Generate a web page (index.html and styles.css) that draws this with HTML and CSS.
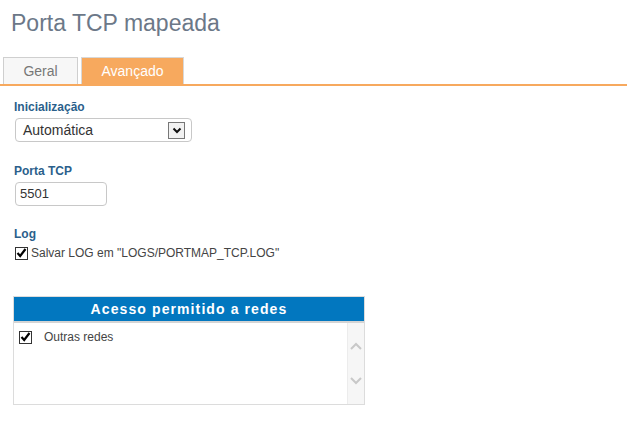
FILE: index.html
```html
<!DOCTYPE html>
<html lang="pt">
<head>
<meta charset="utf-8">
<title>Porta TCP mapeada</title>
<link rel="stylesheet" href="styles.css">
</head>
<body>
<h1 class="title">Porta TCP mapeada</h1>
<div class="tabs">
  <div class="tab">Geral</div>
  <div class="tab active">Avançado</div>
</div>
<div class="content">
  <div class="field field-init">
    <div class="label">Inicialização</div>
    <div class="select">
      <span class="select-text">Automática</span>
      <span class="select-btn">
        <svg width="10" height="7" viewBox="0 0 10 7"><path d="M1.5 1.5 L5 5 L8.5 1.5" fill="none" stroke="#111" stroke-width="2"/></svg>
      </span>
    </div>
  </div>
  <div class="field">
    <div class="label">Porta TCP</div>
    <div class="input">5501</div>
  </div>
  <div class="field">
    <div class="label">Log</div>
    <div class="check-row">
      <span class="check">
        <svg width="11" height="10" viewBox="0 0 11 10"><path d="M1.5 5 L4.2 8 L9.5 1" fill="none" stroke="#000" stroke-width="2.2"/></svg>
      </span>
      <span class="check-label">Salvar LOG em "LOGS/PORTMAP_TCP.LOG"</span>
    </div>
  </div>
  <div class="panel">
    <div class="panel-head">Acesso permitido a redes</div>
    <div class="panel-body">
      <div class="list">
        <div class="list-row">
          <span class="check">
            <svg width="11" height="10" viewBox="0 0 11 10"><path d="M1.5 5 L4.2 8 L9.5 1" fill="none" stroke="#000" stroke-width="2.2"/></svg>
          </span>
          <span class="list-label">Outras redes</span>
        </div>
      </div>
      <div class="scroll">
        <svg width="12" height="8" viewBox="0 0 12 8"><path d="M1 7 L6 2 L11 7" fill="none" stroke="#c8c8c8" stroke-width="2"/></svg>
        <svg width="12" height="8" viewBox="0 0 12 8"><path d="M1 1 L6 6 L11 1" fill="none" stroke="#c8c8c8" stroke-width="2"/></svg>
      </div>
    </div>
  </div>
</div>
</body>
</html>
```
FILE: styles.css
```css
* { box-sizing: border-box; }
body {
  margin: 0;
  background: #fff;
  font-family: "Liberation Sans", Arial, sans-serif;
  color: #333;
}
.title {
  margin: 0;
  padding: 9px 0 0 11px;
  height: 57px;
  font-size: 23px;
  font-weight: normal;
  color: #6c7888;
  line-height: 28px;
}
.tabs {
  display: flex;
  gap: 3px;
  padding-left: 3px;
  border-bottom: 2px solid #f7a95e;
  height: 29px;
}
.tab {
  height: 27px;
  border: 1px solid #cfcfcf;
  border-bottom: none;
  background: #f7f7f7;
  color: #777;
  font-size: 14px;
  line-height: 26px;
  text-align: center;
  width: 75px;
}
.tab.active {
  width: 103px;
  background: #f7a95e;
  border-color: #d8d8d8;
  color: #fff;
}
.content {
  padding: 14px 0 0 14px;
}
.field {
  margin-bottom: 21px;
}
.field-init {
  margin-bottom: 22px;
}
.label {
  font-weight: bold;
  font-size: 12px;
  color: #2b5f8b;
  line-height: 14px;
  margin-bottom: 4px;
}
.select {
  margin-left: 1px;
  width: 177px;
  height: 24px;
  border: 1px solid #c8c8c8;
  border-radius: 4px;
  display: flex;
  align-items: center;
  justify-content: space-between;
  padding: 0 6px 0 7px;
}
.select-text {
  font-size: 14px;
  color: #333;
}
.select-btn {
  width: 17px;
  height: 17px;
  border: 1px solid #777;
  background: #f2f2f2;
  display: flex;
  align-items: center;
  justify-content: center;
}
.input {
  margin-left: 1px;
  width: 92px;
  height: 24px;
  border: 1px solid #c8c8c8;
  border-radius: 4px;
  font-size: 13px;
  line-height: 22px;
  padding-left: 4px;
  color: #333;
}
.check-row {
  display: flex;
  align-items: center;
  margin-left: 1px;
  margin-top: 5px;
}
.check {
  width: 13px;
  height: 13px;
  border: 1px solid #333;
  background: #fff;
  display: flex;
  align-items: center;
  justify-content: center;
  flex: none;
}
.check-label {
  font-size: 12px;
  color: #444;
  margin-left: 3px;
}
.panel {
  margin-top: 36px;
  margin-left: -1px;
  width: 352px;
  border: 1px solid #dcdcdc;
}
.panel-head {
  background: #0277bf;
  color: #fff;
  font-weight: bold;
  font-size: 14px;
  letter-spacing: 1.1px;
  text-align: center;
  height: 26px;
  line-height: 25px;
  border-bottom: 2px solid #d4d4d4;
}
.panel-body {
  display: flex;
  height: 81px;
}
.list {
  flex: 1;
  padding: 7px 0 0 5px;
}
.list-row {
  display: flex;
  align-items: center;
}
.list-label {
  font-size: 12px;
  color: #444;
  margin-left: 12px;
}
.scroll {
  width: 17px;
  background: #f6f6f6;
  border-left: 1px solid #ececec;
  display: flex;
  flex-direction: column;
  align-items: center;
  padding-top: 19px;
  gap: 27px;
}
```
